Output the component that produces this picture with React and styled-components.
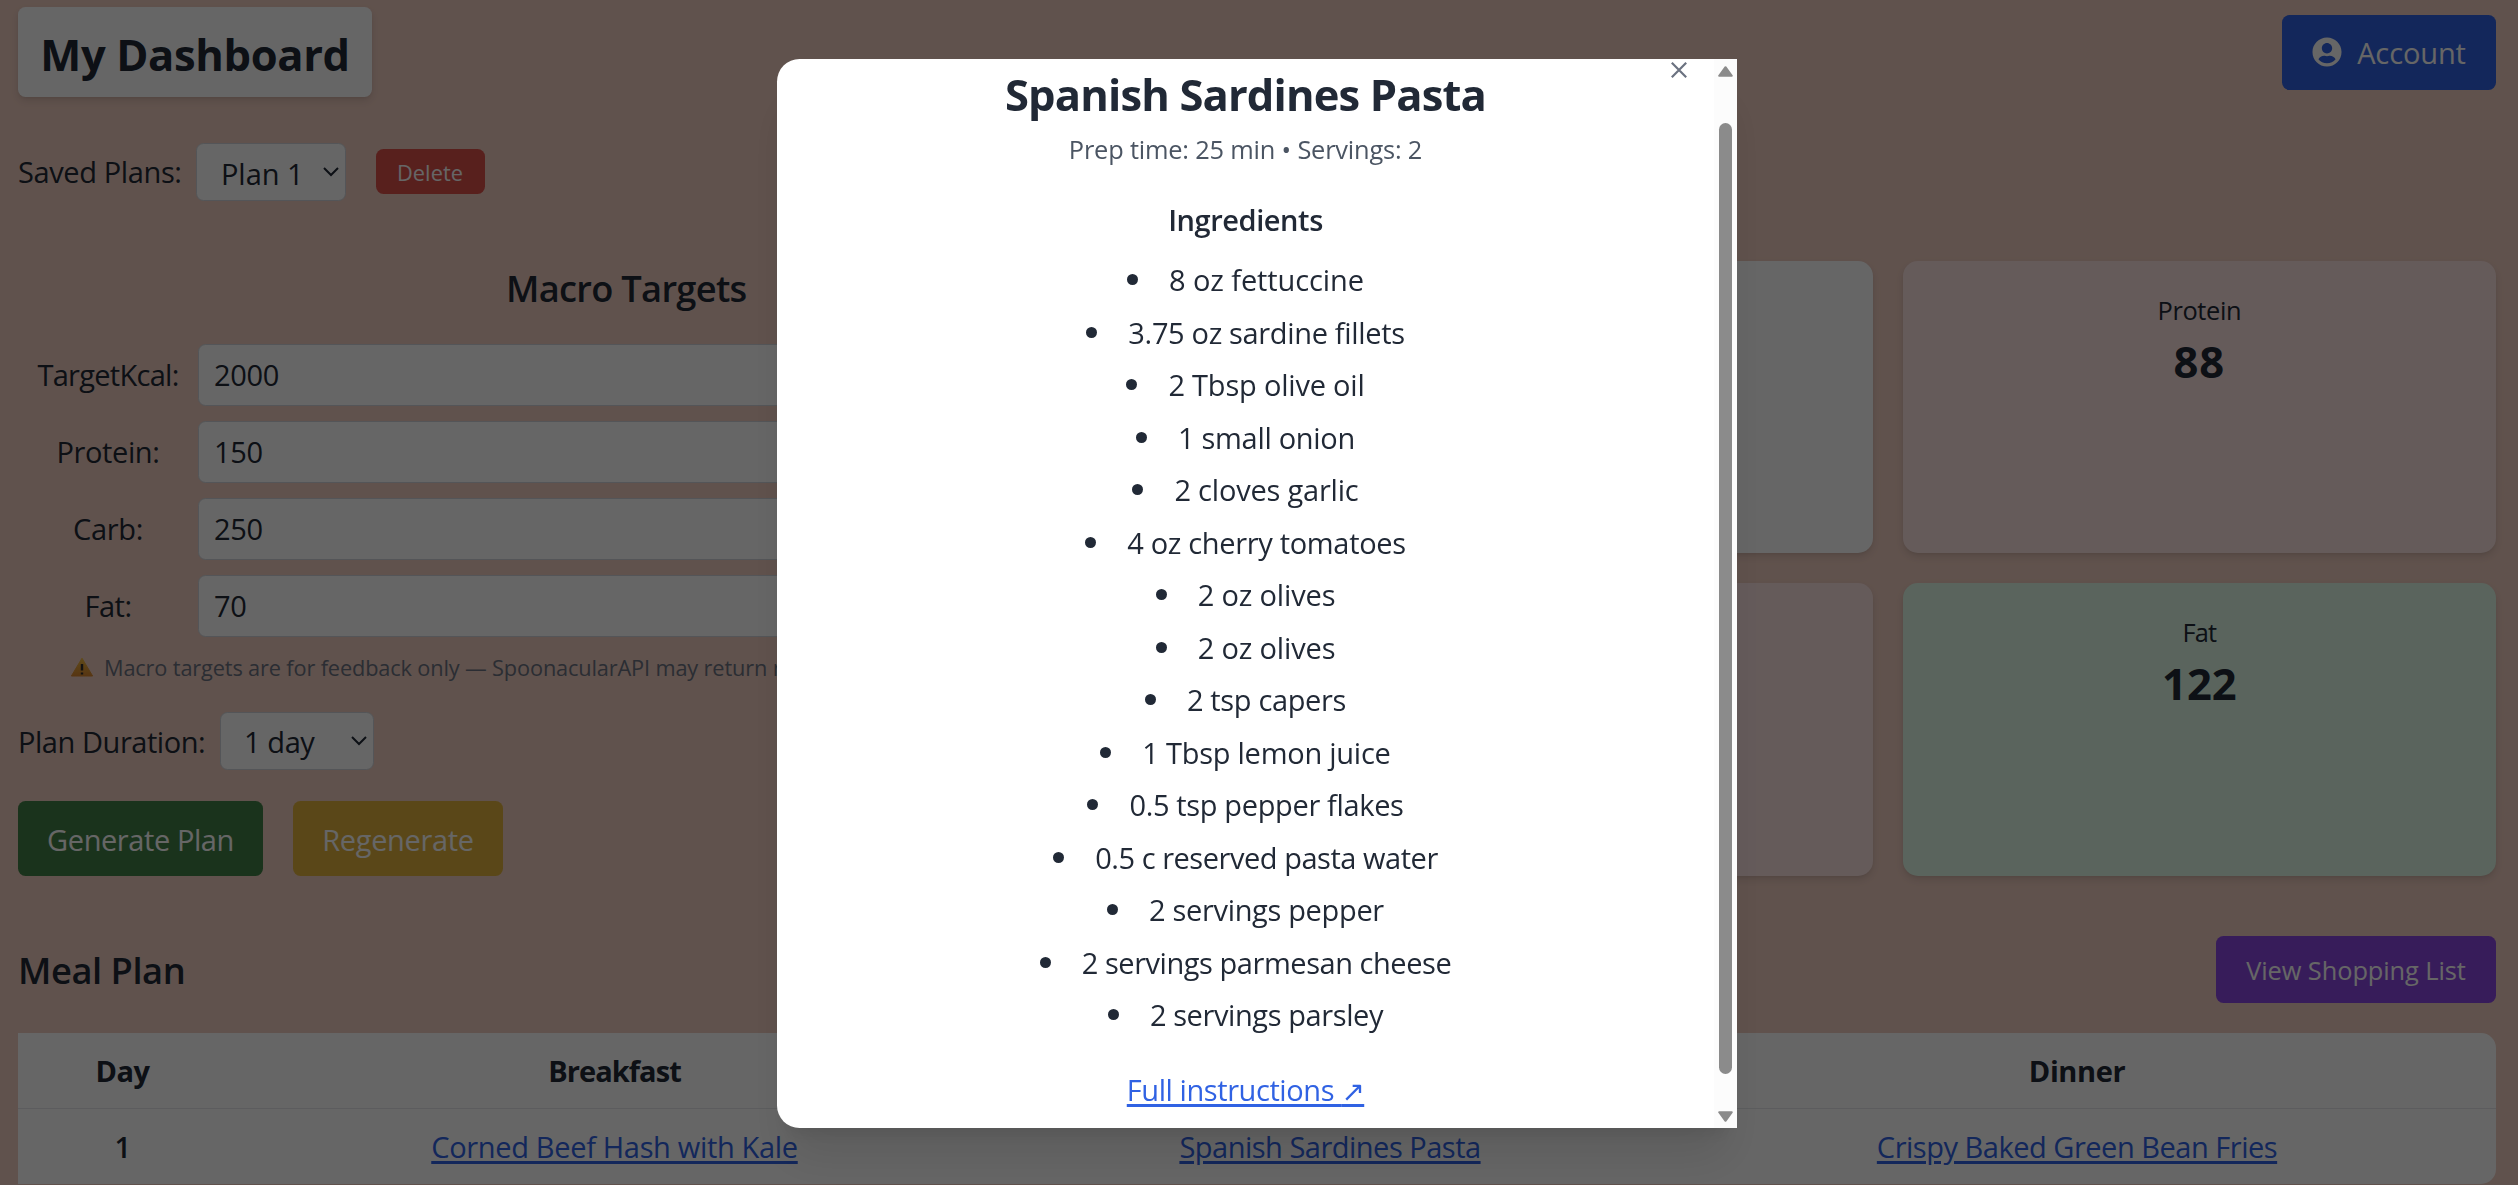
import React from "react";
import styled, { createGlobalStyle } from "styled-components";
import { FaUserCircle } from "react-icons/fa";

const ink = "#212936";
const link = "#3062e3";

const GlobalStyle = createGlobalStyle`
  *, *::before, *::after { box-sizing: border-box; }
  body {
    margin: 0;
    background: #f0cdc0;
    color: ${ink};
    font-family: "Open Sans", "Noto Sans", sans-serif;
    font-size: 29px;
    line-height: 45px;
  }
`;

const Page = styled.div`
  height: 1185px;
  overflow: hidden;
  padding: 7px 22px 0 18px;
`;

const Text = styled.span`
  display: block;
  white-space: nowrap;
  font-size: ${(p) => p.$size || 29}px;
  line-height: ${(p) => p.$lh || 45}px;
  font-weight: ${(p) => p.$weight || 400};
  letter-spacing: ${(p) => (p.$ls === undefined ? -0.35 : p.$ls)}px;
  padding-top: ${(p) => p.$dy || 0}px;
  margin-bottom: ${(p) => -(p.$dy || 0)}px;
`;

const Header = styled.header`
  display: flex;
  justify-content: space-between;
  align-items: center;
  height: 90px;
`;

const TitleBox = styled.h1`
  width: 354px;
  height: 90px;
  margin: 0;
  padding: 15px 22px;
  text-align: center;
  background: #fff;
  border-radius: 7.5px;
  box-shadow: 0 4px 9px rgba(0, 0, 0, 0.1), 0 2px 4px -2px rgba(0, 0, 0, 0.1);
`;

const Button = styled.button`
  display: flex;
  align-items: center;
  justify-content: center;
  gap: 15px;
  width: ${(p) => p.$w}px;
  height: ${(p) => p.$h || 75}px;
  padding: 0;
  border: 0;
  border-radius: 7.5px;
  background: ${(p) => p.$bg};
  color: #fff;
  font-family: inherit;
`;

const Row = styled.div`
  display: flex;
  align-items: center;
  height: ${(p) => p.$h || 58}px;
  margin-top: ${(p) => p.$mt || 0}px;
  gap: ${(p) => p.$gap || 0}px;
`;

const RowLabel = styled.div`
  width: ${(p) => p.$w}px;
`;

const SelectBox = styled.div`
  display: flex;
  align-items: center;
  justify-content: space-between;
  width: ${(p) => p.$w}px;
  height: 58px;
  padding: 0 6px 0 21px;
  margin-right: 30px;
  background: #fff;
  border: 1px solid #d1d5db;
  border-radius: 7.5px;
`;

const Planner = styled.section`
  display: grid;
  grid-template-columns: 1fr 1fr;
  column-gap: 45px;
  height: 615px;
  margin-top: 60px;
`;

const TargetsHeading = styled.h2`
  margin: 0 0 30.5px;
  text-align: center;
`;

const Field = styled.div`
  display: flex;
  align-items: center;
  height: 62px;
  margin-bottom: 15px;
`;

const FieldLabel = styled.label`
  width: 180px;
  text-align: center;
`;

const FieldInput = styled.input`
  flex: 1;
  height: 62px;
  padding: 0 15px;
  border: 1px solid #d1d5db;
  border-radius: 7.5px;
  background: #fff;
  color: ${ink};
  font: 29px "Open Sans", "Noto Sans", sans-serif;
  letter-spacing: -0.35px;
`;

const Note = styled.div`
  display: flex;
  align-items: center;
  gap: 10px;
  height: 30px;
  padding-left: 52px;
  color: #6b7280;
`;

const Cards = styled.div`
  display: grid;
  grid-template-columns: 1fr 1fr;
  grid-template-rows: 292px 293px;
  gap: 30px;
`;

const Card = styled.div`
  padding: 30px;
  text-align: center;
  background: ${(p) => p.$bg};
  border-radius: 15px;
  box-shadow: 0 4px 9px rgba(0, 0, 0, 0.1), 0 2px 4px -2px rgba(0, 0, 0, 0.1);
`;

const MealHeader = styled.div`
  display: flex;
  justify-content: space-between;
  align-items: center;
  height: 67px;
  margin: 60.5px 0 30px;
`;

const MealTable = styled.div`
  background: #fff;
  border-radius: 0 15px 15px 0;
`;

const MealRow = styled.div`
  display: grid;
  grid-template-columns: 209px 775px 656px 838px;
  align-items: center;
  justify-items: center;
  height: ${(p) => (p.$head ? 76 : 75)}px;
  border-bottom: ${(p) => (p.$head ? "1px solid #e5e7eb" : "0")};
`;

const Link = styled.a`
  color: ${link};
  white-space: nowrap;
  letter-spacing: ${(p) => p.$ls}px;
  text-decoration: underline;
  text-decoration-thickness: 3px;
  text-underline-offset: 3px;
`;

const Overlay = styled.div`
  position: fixed;
  inset: 0;
  display: flex;
  align-items: flex-start;
  justify-content: center;
  padding: 59px 4px 0 0;
  background: rgba(0, 0, 0, 0.6);
`;

const Modal = styled.div`
  position: relative;
  display: flex;
  width: 960px;
  height: 1069px;
  overflow: hidden;
  background: #fff;
  border-radius: 22.5px 0 0 22.5px;
  box-shadow: 0 37.5px 47px -9px rgba(0, 0, 0, 0.1), 0 15px 19px -11px rgba(0, 0, 0, 0.1);
`;

const ModalBody = styled.div`
  flex: 1;
  display: flex;
  flex-direction: column;
  align-items: center;
  padding-top: 5px;
`;

const CloseButton = styled.button`
  position: absolute;
  top: 3px;
  left: 894px;
  width: 16px;
  height: 16px;
  padding: 0;
  border: 0;
  background: none;
  line-height: 0;
`;

const Scrollbar = styled.div`
  width: 23px;
  display: flex;
  flex-direction: column;
  align-items: center;
  justify-content: space-between;
  padding: 7px 0 6px;
  background: #fcfcfc;
`;

const Thumb = styled.div`
  width: 13px;
  height: 951px;
  margin-bottom: -9px;
  border-radius: 6.5px;
  background: #8b8b8b;
`;

const Meta = styled.div`
  margin: 6.5px 0 29px;
  color: #4b5563;
`;

const Ingredients = styled.ul`
  display: flex;
  flex-direction: column;
  gap: 7.5px;
  margin: 15px 0 30px;
  padding: 0;
  list-style: none;
`;

const Ingredient = styled.li`
  display: flex;
  align-items: center;
  justify-content: center;
  gap: 31px;
  &::before {
    content: "";
    width: 11px;
    height: 11px;
    border-radius: 50%;
    background: ${ink};
  }
`;

const Arrow = styled.span`
  font-family: "DejaVu Sans", sans-serif;
  font-size: 28px;
`;

const Chevron = () => (
  <svg width="16" height="10" viewBox="0 0 16 10" fill="none" stroke={ink} strokeWidth="2">
    <path d="M1 1l7 7 7-7" />
  </svg>
);

const Warning = () => (
  <svg width="24" height="20" viewBox="0 0 24 20">
    <defs>
      <linearGradient id="amber" x1="0" y1="0" x2="0" y2="1">
        <stop offset="0" stopColor="#efb93f" />
        <stop offset="1" stopColor="#d9862f" />
      </linearGradient>
    </defs>
    <path d="M12 1.2L22.6 19H1.4z" fill="url(#amber)" stroke="url(#amber)" strokeLinejoin="round" />
    <path d="M12 7v6.5M12 15.4v2.2" stroke="#33302e" strokeWidth="2.4" />
  </svg>
);

const ScrollArrow = ({ down }) => (
  <svg width="15" height="11" viewBox="0 0 15 11" fill="#8b8b8b" stroke="#8b8b8b" strokeWidth="2" strokeLinejoin="round">
    <path d={down ? "M1.2 1.2h12.6L7.5 9.8z" : "M1.2 9.8h12.6L7.5 1.2z"} />
  </svg>
);

const targets = [
  ["TargetKcal:", "2000", -0.71],
  ["Protein:", "150", -0.4],
  ["Carb:", "250", -0.35],
  ["Fat:", "70", -0.5],
];

const stats = [
  ["Calories", "2056", "#fff", 0],
  ["Protein", "88", "#fde3e2", 1.1],
  ["Carbs", "162", "#fde3e2", 0],
  ["Fat", "122", "#e0fbe8", 0],
];

const ingredients = [
  ["8 oz fettuccine", -0.1],
  ["3.75 oz sardine fillets", -0.34],
  ["2 Tbsp olive oil", -0.2],
  ["1 small onion", -0.3],
  ["2 cloves garlic", -0.2],
  ["4 oz cherry tomatoes", -0.33],
  ["2 oz olives", -0.15],
  ["2 oz olives", -0.15],
  ["2 tsp capers", -0.35],
  ["1 Tbsp lemon juice", -0.25],
  ["0.5 tsp pepper flakes", -0.35],
  ["0.5 c reserved pasta water", -0.46],
  ["2 servings pepper", -0.33],
  ["2 servings parmesan cheese", -0.45],
  ["2 servings parsley", -0.4],
];

export default function App() {
  return (
    <>
      <GlobalStyle />
      <Page>
        <Header>
          <TitleBox>
            <Text $size={43.5} $lh={60} $weight={700} $ls={-0.35} $dy={3}>My Dashboard</Text>
          </TitleBox>
          <Button $w={214} $bg="#3062e3">
            <FaUserCircle size={30} />
            <Text $ls={-0.11}>Account</Text>
          </Button>
        </Header>

        <Row $mt={45.5}>
          <RowLabel $w={178}><Text $ls={-0.38}>Saved Plans:</Text></RowLabel>
          <SelectBox $w={149.5}><Text $ls={0} $dy={2}>&#8202;Plan 1</Text><Chevron /></SelectBox>
          <Button $w={109} $h={45} $bg="#dc504a"><Text $size={21.75} $lh={30} $ls={0.05} $dy={1}>Delete</Text></Button>
        </Row>

        <Planner>
          <div>
            <TargetsHeading>
              <Text $size={36.25} $lh={52.5} $weight={600} $ls={-0.72} $dy={1}>Macro Targets</Text>
            </TargetsHeading>
            {targets.map(([label, value, ls]) => (
              <Field key={label}>
                <FieldLabel><Text $ls={ls}>{label}</Text></FieldLabel>
                <FieldInput readOnly value={value} />
              </Field>
            ))}
            <Note>
              <Warning />
              <Text $size={21.75} $lh={30} $ls={-0.15} $dy={1}>
                Macro targets are for feedback only — SpoonacularAPI may return nearby values
              </Text>
            </Note>
            <Row $mt={30}>
              <RowLabel $w={201.5}><Text $ls={-0.45} $dy={1}>Plan Duration:</Text></RowLabel>
              <SelectBox $w={154}><Text $ls={-0.4} $dy={1}>&#8202;1 day</Text><Chevron /></SelectBox>
            </Row>
            <Row $mt={31} $h={75} $gap={30}>
              <Button $w={245} $bg="#437f46"><Text $ls={-0.42} $dy={1}>Generate Plan</Text></Button>
              <Button $w={210} $bg="#e1b23e"><Text $ls={-0.34} $dy={1}>Regenerate</Text></Button>
            </Row>
          </div>
          <Cards>
            {stats.map(([label, value, bg, ls]) => (
              <Card key={label} $bg={bg}>
                <Text $size={25.4} $lh={37.5} $ls={label === "Fat" ? -0.9 : -0.34} $dy={1}>{label}</Text>
                <Text $size={43.5} $lh={60} $weight={700} $ls={ls} $dy={4}>{value}</Text>
              </Card>
            ))}
          </Cards>
        </Planner>

        <MealHeader>
          <Text $size={36.25} $lh={52.5} $weight={600} $ls={-0.45} $dy={1}>Meal Plan</Text>
          <Button $w={280} $h={67} $bg="#8a46e1"><Text $size={25.4} $lh={37.5} $ls={-0.08} $dy={1}>View Shopping List</Text></Button>
        </MealHeader>

        <MealTable>
          <MealRow $head>
            <Text $weight={700} $ls={-0.49}>Day</Text>
            <Text $weight={700} $ls={-0.93}>Breakfast</Text>
            <Text $weight={700} $ls={-0.5}>Lunch</Text>
            <Text $weight={700} $ls={-0.41}>Dinner</Text>
          </MealRow>
          <MealRow>
            <Text $weight={600}>1</Text>
            <Link $ls={-0.33}>Corned Beef Hash with Kale</Link>
            <Link $ls={-0.5}>Spanish Sardines Pasta</Link>
            <Link $ls={-0.48}>Crispy Baked Green Bean Fries</Link>
          </MealRow>
        </MealTable>
      </Page>

      <Overlay>
        <Modal>
          <ModalBody>
            <Text $size={43.5} $lh={60} $weight={700} $ls={-0.84} $dy={1}>Spanish Sardines Pasta</Text>
            <Meta><Text $size={25.4} $lh={37.5} $ls={-0.19}>Prep time: 25 min • Servings: 2</Text></Meta>
            <Text $weight={600} $ls={-0.43}>Ingredients</Text>
            <Ingredients>
              {ingredients.map(([name, ls], i) => (
                <Ingredient key={i}><Text $ls={ls}>{name}</Text></Ingredient>
              ))}
            </Ingredients>
            <Link $ls={-0.42}>Full instructions <Arrow>↗</Arrow></Link>
          </ModalBody>
          <Scrollbar>
            <ScrollArrow />
            <Thumb />
            <ScrollArrow down />
          </Scrollbar>
          <CloseButton aria-label="Close">
            <svg width="16" height="16" viewBox="0 0 16 16" stroke="#6b7280" strokeWidth="2.2">
              <path d="M.8.8l14.4 14.4M15.2.8L.8 15.2" />
            </svg>
          </CloseButton>
        </Modal>
      </Overlay>
    </>
  );
}
